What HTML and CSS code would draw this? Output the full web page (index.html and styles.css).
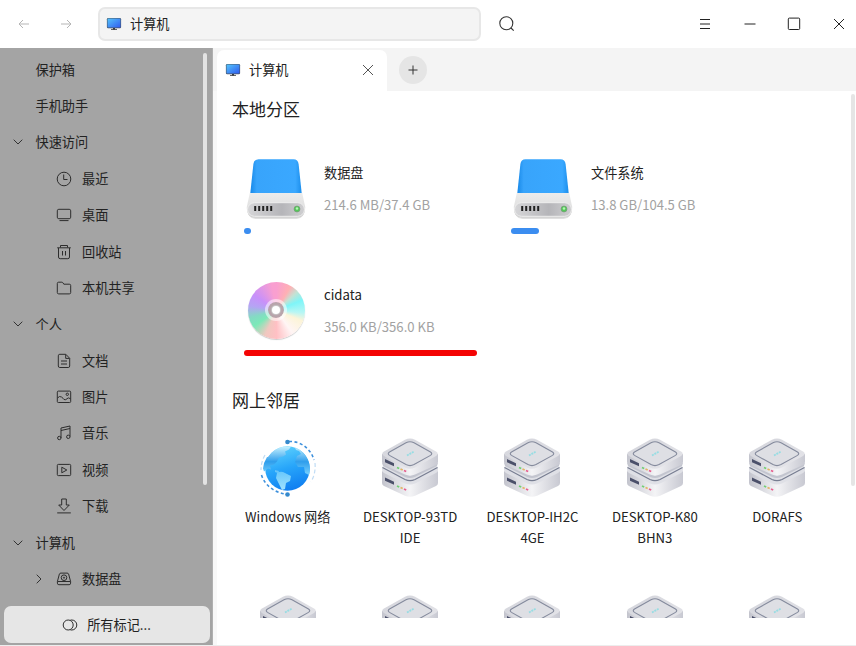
FILE: index.html
```
<!DOCTYPE html>
<html lang="zh-CN">
<head>
<meta charset="utf-8">
<title>计算机</title>
<link rel="stylesheet" href="styles.css">
</head>
<body>
<svg class="defs" width="0" height="0" aria-hidden="true">
  <defs>
    <linearGradient id="scr" x1="0" y1="0" x2="1" y2="1"><stop offset="0" stop-color="#55c5fb"/><stop offset="1" stop-color="#2f5bf0"/></linearGradient>
    <linearGradient id="blue" x1="0" y1="0" x2="1" y2="0"><stop offset="0" stop-color="#1688e8"/><stop offset=".13" stop-color="#38a4fb"/><stop offset=".87" stop-color="#3aa8ff"/><stop offset="1" stop-color="#1a8deb"/></linearGradient>
    <linearGradient id="base" x1="0" y1="0" x2="0" y2="1"><stop offset="0" stop-color="#ececec"/><stop offset=".5" stop-color="#e2e2e2"/><stop offset="1" stop-color="#c8c8c8"/></linearGradient>
    <linearGradient id="panel" x1="0" y1="0" x2="1" y2="0"><stop offset="0" stop-color="#d6d6d8"/><stop offset=".6" stop-color="#b5b5b9"/><stop offset="1" stop-color="#cfcfd1"/></linearGradient>
    <linearGradient id="sea" x1=".3" y1="0" x2=".6" y2="1"><stop offset="0" stop-color="#5fd2fd"/><stop offset=".5" stop-color="#27a5fa"/><stop offset="1" stop-color="#0f7df0"/></linearGradient>
    <linearGradient id="land" x1="0" y1="0" x2="0" y2="1"><stop offset="0" stop-color="#c5f1ff"/><stop offset=".35" stop-color="#2f9eec"/><stop offset=".6" stop-color="#6cc9fb"/><stop offset="1" stop-color="#a0e2fe"/></linearGradient>
    <linearGradient id="top" x1="0" y1="0" x2="1" y2="1"><stop offset="0" stop-color="#d2d3da"/><stop offset="1" stop-color="#e7e7eb"/></linearGradient>
    <linearGradient id="side" x1="0" y1="0" x2="1" y2="0"><stop offset="0" stop-color="#c3c4cd"/><stop offset=".5" stop-color="#f4f4f6"/><stop offset="1" stop-color="#c8c9d2"/></linearGradient>
    <symbol id="monitor" viewBox="0 0 16 14"><path d="M5 11.900h6v1H5z" fill="#555"/><path d="M7 11h2v1.500H7z" fill="#333"/><rect x=".9" y=".9" width="14.2" height="10.3" rx="1.3" fill="#485363"/><rect x="1.5" y="1.5" width="13" height="9.100" rx=".5" fill="url(#scr)"/></symbol>
    <symbol id="drive" viewBox="0 0 60 62">
      <path d="M1.500 50q0 11 8 11h41q8 0 8-11z" fill="#bbb" opacity=".45"/>
      <path d="M4 38 7.400 6Q8 1.200 12.500 1.200h35Q52 1.200 52.600 6L56 38z" fill="url(#blue)"/>
      <path d="M3.800 35h52.400l3 14q.4 10.500-8 10.500H8.800Q.400 59.500.8 49z" fill="url(#base)"/>
      <rect x="1.500" y="44.700" width="57" height="13.600" rx="6.800" fill="url(#panel)" stroke="#eee" stroke-width="1"/>
      <path d="M9.200 48v5M13.200 48v5M17.200 48v5M21.200 48v5M25.200 48v5" stroke="#222" stroke-width="2"/>
      <circle cx="51" cy="51" r="3" fill="#55c75a" stroke="#79927b" stroke-width=".6"/><circle cx="51" cy="50.500" r="1.200" fill="#b5f5b4"/>
    </symbol>
    <symbol id="globe" viewBox="0 0 60 60">
      <circle cx="29.500" cy="30.500" r="22.300" fill="url(#sea)"/>
      <path d="M10 19Q16 10 26 8.500l7 0-2 3-4 2 1 3-3 2-4 1-2 4-3 3-4 1 1 4-3-1-4 3-1-3q.500-6 4-11.500zM37 9.500q8 3 12.500 11.500 4 8 1.500 16l-4-2-1-6-6 0-3-5 2-6 4-2-2-3-3-1zM17 32l4 1-1 2-3-1zM19 35q4-2.500 8 0l6 3-1 5-4 2-1 6-3 1-3-6-3-6z" fill="url(#land)"/>
      <path d="M31 3.500C43 3 53 11 56 22" fill="none" stroke="#3d90dc" stroke-width="1.600" stroke-dasharray="3 2.500"/>
      <path d="M57 25q1 10-4 19M7 17q-4 7-4 15" fill="none" stroke="#bfdcf5" stroke-width="1.200" stroke-dasharray="4 2.500"/>
      <path d="M3.500 37C7 48 17 55 30 56.500" fill="none" stroke="#3d90dc" stroke-width="1.600" stroke-dasharray="3 2.500"/>
      <circle cx="29.500" cy="4" r="2.300" fill="#3589cc"/><circle cx="29.500" cy="56.500" r="2.300" fill="#3589cc"/>
    </symbol>
    <symbol id="server" viewBox="0 0 60 62">
      <path d="M2 34l28 8 28-8v12q0 2-2 3L35 58.800q-5 2-10 0L4 49q-2-1-2-3z" fill="url(#side)"/>
      <path d="M2 30 30 15l28 15v3q0 2-2 3L35 46.500q-5 2-10 0L4 36q-2-1-2-3z" fill="#dfe0e6"/>
      <path d="M2.500 30.500 25 42.500q5 2.300 10 0L57.500 30.500" fill="none" stroke="#777d91" stroke-width="1.200"/>
      <path d="M2 26l28 13 28-13-1 3-22 11q-5 2-10 0L3 29z" fill="#c3c5cf"/>
      <path d="M2 17h56v8q0 2-2 3L35 37.500q-5 2-10 0L4 28q-2-1-2-3z" fill="url(#side)"/>
      <path d="M4 14.500 25 2.700q5-2.500 10 0l21 11.800q3.500 2.200 0 4.400L35 30.500q-5 2.500-10 0L4 18.900q-3.500-2.200 0-4.400z" fill="url(#top)"/>
      <path d="M9.500 15 26 5.800q4-2 8 0L50.500 15q2.500 1.700 0 3.400L34 27.600q-4 2-8 0L9.500 18.400q-2.500-1.700 0-3.400z" fill="#dedfe4" stroke="#858b9d" stroke-width="1.100"/>
      <path d="M27 18.500l7-4" stroke="#85dce2" stroke-width="1.800" stroke-dasharray="2 .8" opacity=".8"/>
      <path d="M5 22l9 4.300v3L5 25.200zM5 40.500l9 4.300v3L5 43.700z" fill="#4b506a"/>
      <g fill="none" stroke-width="1.800"><path d="M17 30.500l2.200 1M17 49l2.200 1" stroke="#72cf75"/><path d="M20.500 32l2.200 1M20.500 50.500l2.200 1" stroke="#e3b565"/><path d="M24 33.500l2.200 1M24 52l2.200 1" stroke="#e75f8f"/></g>
    </symbol>
  </defs>
</svg>
<div class="window">
  <header class="titlebar">
    <svg class="arrow" viewBox="0 0 12 10"><path d="M11 5H1M5 1 1 5l4 4"/></svg>
    <svg class="arrow fwd" viewBox="0 0 12 10"><path d="M1 5h10M7 1l4 4-4 4"/></svg>
    <div class="address"><svg class="mon"><use href="#monitor"/></svg><span>计算机</span></div>
    <svg class="search" viewBox="0 0 16 16"><circle cx="7.300" cy="7.300" r="6.500"/><path d="M12 12l2.700 2.700"/></svg>
    <div class="controls">
      <svg viewBox="0 0 14 14"><path d="M2 2.500h10M2 7h10M2 11.500h10"/></svg>
      <svg viewBox="0 0 14 14"><path d="M1.500 7h11"/></svg>
      <svg viewBox="0 0 14 14"><rect x="1.300" y="1.100" width="11.400" height="11.400" rx="1"/></svg>
      <svg viewBox="0 0 14 14"><path d="M2 2l10 10M12 2 2 12"/></svg>
    </div>
  </header>
  <div class="body">
    <aside class="sidebar">
      <nav class="nav">
        <div class="row top"><span>保护箱</span></div>
        <div class="row top"><span>手机助手</span></div>
        <div class="row top"><svg class="chev" viewBox="0 0 10 6"><path d="M.7.7 5 5 9.300.7"/></svg><span>快速访问</span></div>
        <div class="row"><svg class="ico" viewBox="0 0 16 16"><circle cx="8" cy="8" r="6.800"/><path d="M7.700 3.500V8.500H11.500"/></svg><span>最近</span></div>
        <div class="row"><svg class="ico" viewBox="0 0 16 16"><rect x="1.300" y="2.300" width="13.400" height="9.400" rx="1.500"/><path d="M3.500 13.600h9"/></svg><span>桌面</span></div>
        <div class="row"><svg class="ico" viewBox="0 0 16 16"><path d="M1.200 3.800h13.600M4.500 3.500V1.500h7v2M2.500 4v9q0 1.700 1.700 1.700h7.600q1.700 0 1.700-1.700V4M6.500 7v4.500M9.500 7v4.500"/></svg><span>回收站</span></div>
        <div class="row"><svg class="ico" viewBox="0 0 16 16"><path d="M1.300 12.500v-9q0-1.300 1.300-1.300h3.200q.8 0 1.300.8l.7 1.200h5.500q1.400 0 1.400 1.300v7q0 1.400-1.400 1.400H2.700q-1.400 0-1.400-1.400z"/></svg><span>本机共享</span></div>
        <div class="row top"><svg class="chev" viewBox="0 0 10 6"><path d="M.7.7 5 5 9.300.7"/></svg><span>个人</span></div>
        <div class="row"><svg class="ico" viewBox="0 0 16 16"><path d="M2.300 13V2.800q0-1.500 1.500-1.500h6l3.900 4V13q0 1.500-1.500 1.500H3.800Q2.300 14.500 2.300 13zM9.700 1.500v3.900h3.800M5 8h6M5 11h6"/></svg><span>文档</span></div>
        <div class="row"><svg class="ico" viewBox="0 0 16 16"><rect x="1.300" y="2.100" width="13.400" height="11.400" rx="1"/><path d="M1.500 9Q3.500 6.500 5.500 8T8 10.500q2 .8 3-.8t3.500 0"/><circle cx="11.300" cy="5.300" r="1.200"/></svg><span>图片</span></div>
        <div class="row"><svg class="ico" viewBox="0 0 16 16"><path d="M5 13V3l9-2v10.500M5 5.500l9-2"/><circle cx="3.300" cy="13" r="1.700"/><circle cx="12.300" cy="11.800" r="1.700"/></svg><span>音乐</span></div>
        <div class="row"><svg class="ico" viewBox="0 0 16 16"><rect x="1.300" y="2.400" width="13.400" height="11.200" rx="1"/><path d="M5.800 5.200v5.600L10.800 8z"/></svg><span>视频</span></div>
        <div class="row"><svg class="ico" viewBox="0 0 16 16"><path d="M5.700 1h4.600v6h3L8 12.500 2.700 7h3zM1.200 14.900h13.600"/></svg><span>下载</span></div>
        <div class="row top"><svg class="chev" viewBox="0 0 10 6"><path d="M.7.7 5 5 9.300.7"/></svg><span>计算机</span></div>
        <div class="row sub"><svg class="chev right" viewBox="0 0 6 10"><path d="M.7.7 5 5 .7 9.300"/></svg><svg class="ico" viewBox="0 0 16 16"><path d="M1.400 10.500 3.400 3q.4-.9 1.500-.9h6.200q1.100 0 1.500.9l2 7.500v1.700q0 1.500-1.500 1.500H2.900q-1.500 0-1.500-1.500zM1.500 10.500h13"/><circle cx="8" cy="6.700" r="2.800"/><circle cx="8" cy="6.700" r=".6"/></svg><span>数据盘</span></div>
      </nav>
      <div class="sidescroll"></div>
      <button class="marks"><svg class="ico" viewBox="0 0 16 16"><circle cx="6.200" cy="8" r="5"/><path d="M8.500 3h1.300a5 5 0 0 1 0 10H8.500"/></svg><span>所有标记...</span></button>
    </aside>
    <main class="main">
      <div class="tabs">
        <div class="tab"><svg class="mon"><use href="#monitor"/></svg><span>计算机</span><svg class="close" viewBox="0 0 12 12"><path d="M1 1l10 10M11 1 1 11"/></svg></div>
        <button class="add"><svg viewBox="0 0 10 10"><path d="M5 .5v9M.5 5h9"/></svg></button>
      </div>
      <div class="view">
        <div class="content">
          <h2>本地分区</h2>
          <div class="disks">
            <div class="disk"><div class="info"><svg class="pic"><use href="#drive"/></svg><div><p class="name">数据盘</p><p class="size">214.6 MB/37.4 GB</p></div></div><div class="bar" style="width:7px"></div></div>
            <div class="disk"><div class="info"><svg class="pic"><use href="#drive"/></svg><div><p class="name">文件系统</p><p class="size">13.8 GB/104.5 GB</p></div></div><div class="bar" style="width:28px"></div></div>
            <div class="disk"><div class="info"><div class="pic"><div class="disc"><div class="ring"><div class="hole"></div></div></div></div><div><p class="name">cidata</p><p class="size">356.0 KB/356.0 KB</p></div></div><div class="bar full" style="width:232.5px"></div></div>
          </div>
          <h2>网上邻居</h2>
          <div class="hosts">
            <div class="host"><svg><use href="#globe"/></svg><p>Windows 网络</p></div>
            <div class="host"><svg><use href="#server"/></svg><p>DESKTOP-93TD<br>IDE</p></div>
            <div class="host"><svg><use href="#server"/></svg><p>DESKTOP-IH2C<br>4GE</p></div>
            <div class="host"><svg><use href="#server"/></svg><p>DESKTOP-K80<br>BHN3</p></div>
            <div class="host"><svg><use href="#server"/></svg><p>DORAFS</p></div>
            <div class="host"><svg><use href="#server"/></svg></div>
            <div class="host"><svg><use href="#server"/></svg></div>
            <div class="host"><svg><use href="#server"/></svg></div>
            <div class="host"><svg><use href="#server"/></svg></div>
            <div class="host"><svg><use href="#server"/></svg></div>
          </div>
        </div>
        <div class="scroll"></div>
      </div>
    </main>
  </div>
</div>
</body>
</html>
```
FILE: styles.css
```
* { box-sizing: border-box; margin: 0; padding: 0; }
body { width: 856px; height: 646px; overflow: hidden; background: #fff; color: #222; font: 13.2px/20px "Noto Sans CJK SC", sans-serif; }
svg { display: block; flex: none; fill: none; }
.defs { position: absolute; }
.window { height: 646px; display: flex; flex-direction: column; border-bottom: 1px solid #ededed; }
.titlebar { height: 48px; flex: none; display: flex; align-items: center; padding: 0 10.500px 0 18px; }
.arrow { width: 12px; height: 10px; stroke: #b5b5b5; }
.arrow.fwd { margin-left: 30px; }
.address { margin-left: 26px; width: 383px; height: 34px; border: 2px solid #e7e7e7; border-radius: 7px; background: #f4f4f4; display: flex; align-items: center; gap: 8px; padding-left: 6px; }
.mon { width: 16px; height: 14px; }
.search { width: 16px; height: 16px; margin-left: 18px; stroke: #333; stroke-width: 1.1; }
.controls { margin-left: auto; display: flex; gap: 30.500px; }
.controls svg { width: 14px; height: 14px; stroke: #222; stroke-width: 1; }
.body { flex: 1; min-height: 0; display: flex; }
.sidebar { position: relative; width: 213px; flex: none; background: #a4a4a4; border-right: 1px solid #b0b0b0; padding: 3.400px 2px 2px 4px; display: flex; flex-direction: column; justify-content: space-between; }
.row { height: 36.400px; display: flex; align-items: center; padding-left: 52px; }
.row.top { padding-left: 31.500px; }
.row.sub { padding-left: 32px; }
.chev { width: 10px; height: 6px; stroke: #333; margin-left: -22.500px; margin-right: 12.500px; }
.chev.right { width: 6px; height: 10px; margin-left: 0; margin-right: 14px; }
.ico { width: 16px; height: 16px; stroke: #2d2d2d; stroke-width: 1; margin-right: 10px; }
.marks { height: 37px; border: 0; border-radius: 7px; background: #e6e6e6; display: flex; align-items: center; justify-content: center; font: inherit; color: #222; padding-right: 1px; }
.marks .ico { margin-right: 9px; }
.sidescroll { position: absolute; right: 5px; top: 5px; width: 4px; height: 432px; border-radius: 2px; background: #e3e3e3; }
.main { flex: 1; min-width: 0; display: flex; flex-direction: column; }
.tabs { height: 42.500px; flex: none; background: #f4f4f4; display: flex; padding-left: 4px; }
.tab { width: 170px; margin-top: 2px; background: #fff; border-radius: 7px 7px 0 0; display: flex; align-items: center; padding: 0 12.600px 0 8px; gap: 8px; }
.tab .close { width: 12px; height: 12px; stroke: #555; margin-left: auto; }
.add { width: 28px; height: 28px; border: 0; border-radius: 50%; background: #e5e5e5; margin: 7.500px 0 0 11.500px; display: flex; align-items: center; justify-content: center; }
.add svg { width: 10px; height: 10px; stroke: #333; }
.view { flex: 1; min-height: 0; border-left: 4px solid #f8f8f8; display: flex; justify-content: space-between; align-items: flex-start; }
.content { width: 630px; height: 527px; overflow: hidden; padding: 5.500px 0 0 15px; }
h2 { font-weight: 400; font-size: 17px; line-height: 26px; }
.disks { display: grid; grid-template-columns: 267px 267px; grid-auto-rows: 122.400px; height: 229.400px; margin-top: 36px; padding-left: 12px; }
.info { display: flex; gap: 18px; height: 70px; padding-left: 2px; }
.pic { width: 60px; height: 62px; }
.name { margin-top: 4.900px; }
.size { margin-top: 13px; color: #a2a2a2; line-height: 18px; font-size: 13.100px; }
.bar { height: 6px; border-radius: 3px; background: #3b8df0; }
.bar.full { background: #f40404; }
.disc { width: 57px; height: 57px; margin: 1.500px 0 0 1.500px; border-radius: 50%; display: flex; align-items: center; justify-content: center; box-shadow: 0 1px 1px #ccc; background: conic-gradient(#f99fd0 0deg, #ffb0b4 30deg, #c4e2d4 48deg, #7ef5f8 68deg, #b8f6f4 95deg, #fcf4d8 112deg, #fff5f5 145deg, #ffc0c4 180deg, #f0c8c0 205deg, #7be9b8 235deg, #84dac4 255deg, #b5a4f4 280deg, #c890fa 305deg, #f99fd0 350deg, #f99fd0 360deg); }
.ring { width: 22px; height: 22px; border: 3px solid rgba(255,255,255,.55); border-radius: 50%; background: #b8a4ab; background-clip: padding-box; display: flex; align-items: center; justify-content: center; }
.hole { width: 8px; height: 8px; border-radius: 50%; background: #fff; box-shadow: 0 0 1px 1px #c9c9c9; }
.hosts { display: grid; grid-template-columns: repeat(5, 122.400px); grid-auto-rows: 157px; margin: 23.600px 0 0 -5.500px; }
.host { display: flex; flex-direction: column; align-items: center; text-align: center; line-height: 21px; white-space: nowrap; }
.host svg { width: 60px; height: 62px; }
.host p { margin-top: 7px; }
.scroll { width: 4px; height: 392px; margin: 3px 1px 0 0; border-radius: 2px; background: #e5e5e5; }
```
